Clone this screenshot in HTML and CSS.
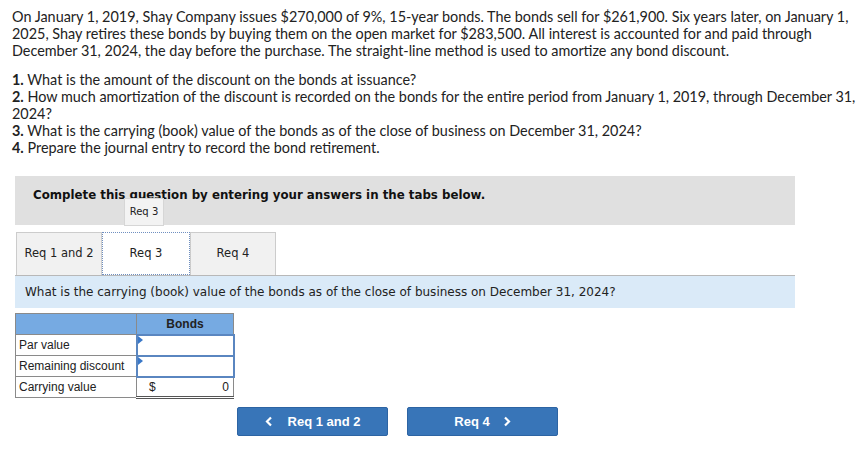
FILE: index.html
```html
<!DOCTYPE html>
<html lang="en">
<head>
  <meta charset="UTF-8" />
  <title>Bond retirement</title>
  <link rel="stylesheet" href="styles.css">
</head>
<body>
  <div class="question">
    <p class="intro">On January 1, 2019, Shay Company issues $270,000 of 9%, 15-year bonds. The bonds sell for $261,900. Six years later, on January 1, 2025, Shay retires these bonds by buying them on the open market for $283,500. All interest is accounted for and paid through December 31, 2024, the day before the purchase. The straight-line method is used to amortize any bond discount.</p>
    <ol class="reqs">
      <li><b>1.</b> What is the amount of the discount on the bonds at issuance?</li>
      <li><b>2.</b> How much amortization of the discount is recorded on the bonds for the entire period from January 1, 2019, through December 31, 2024?</li>
      <li><b>3.</b> What is the carrying (book) value of the bonds as of the close of business on December 31, 2024?</li>
      <li><b>4.</b> Prepare the journal entry to record the bond retirement.</li>
    </ol>
  </div>

  <div class="tabs-wrap">
    <div class="tabs-head">
      Complete this question by entering your answers in the tabs below.
      <span class="tooltip">Req 3</span>
    </div>

    <div class="tab-row">
      <div class="tab">Req 1 and 2</div>
      <div class="tab active">Req 3</div>
      <div class="tab">Req 4</div>
    </div>

    <div class="tab-prompt">What is the carrying (book) value of the bonds as of the close of business on December 31, 2024?</div>

    <table class="grid">
      <tr>
        <th class="blank"></th>
        <th>Bonds</th>
      </tr>
      <tr>
        <td class="label">Par value</td>
        <td class="input"><span class="mark"></span></td>
      </tr>
      <tr>
        <td class="label">Remaining discount</td>
        <td class="input"><span class="mark"></span></td>
      </tr>
      <tr>
        <td class="label">Carrying value</td>
        <td class="total"><span class="cur">$</span><span class="num">0</span></td>
      </tr>
    </table>

    <div class="nav">
      <button class="nav-btn">
        <svg class="chev prev" width="8" height="11" viewBox="0 0 8 11"><polyline points="6,1.5 2,5.5 6,9.5" /></svg>
        Req 1 and 2
      </button>
      <button class="nav-btn">
        Req 4
        <svg class="chev next" width="8" height="11" viewBox="0 0 8 11"><polyline points="2,1.5 6,5.5 2,9.5" /></svg>
      </button>
    </div>
  </div>
</body>
</html>
```

FILE: styles.css
```css
* {
  box-sizing: border-box;
}

body {
  margin: 0;
  background: #fff;
  color: #222;
}

.question {
  font-family: Lato, 'Liberation Sans', sans-serif;
  font-size: 14.4px;
  line-height: 17px;
  padding: 8px 0 0 12px;
  width: 864px;
}

.intro {
  margin: 0 0 12px;
}

.reqs {
  list-style: none;
  margin: 0;
  padding: 0;
}

.tabs-wrap {
  margin: 20px 0 0 15px;
  width: 780px;
  font-family: 'DejaVu Sans', Verdana, sans-serif;
}

.tabs-head {
  position: relative;
  background: #e0e0e0;
  height: 49px;
  padding: 12px 18px;
  font-size: 11.8px;
  font-weight: bold;
  color: #111;
}

.tooltip {
  position: absolute;
  left: 109px;
  top: 22px;
  width: 40px;
  height: 28px;
  background: #f3f3f3;
  border: 1px solid #d6d6d6;
  font-size: 10px;
  font-weight: normal;
  line-height: 26px;
  text-align: center;
  color: #222;
}

.tab-row {
  display: flex;
  margin-top: 7px;
  padding-left: 1px;
}

.tab {
  width: 86px;
  height: 43px;
  line-height: 41px;
  text-align: center;
  font-size: 11.5px;
  background: #f1f1f1;
  border: 1px solid #ccc;
  border-bottom: none;
  color: #222;
}

.tab.active {
  width: 88px;
  background: #fff;
  border: 1px dotted #6f8fc0;
}

.tab-prompt {
  background: #daeaf8;
  border-top: 1px solid #b8b8b8;
  height: 33px;
  line-height: 33px;
  padding-left: 10px;
  font-size: 12px;
  color: #222;
}

.grid {
  margin-top: 5px;
  border-collapse: collapse;
  font-family: 'Liberation Sans', Arial, sans-serif;
  font-size: 12px;
  color: #222;
}

.grid th {
  background: #76aae2;
  border: 1px solid #8a8a8a;
  height: 21px;
  width: 97px;
  font-weight: bold;
  color: #222;
}

.grid th.blank {
  width: 121px;
}

.grid td {
  height: 21px;
  padding: 0;
  border-bottom: 1px solid #8a8a8a;
  border-left: 1px solid #8a8a8a;
  border-right: 1px solid #8a8a8a;
}

.grid td.label {
  padding-left: 3px;
}

.grid td.input {
  position: relative;
  border: 2px solid #5a86c0;
  background: #fff;
}

.mark {
  position: absolute;
  left: 0;
  top: 0;
  border-top: 4px solid transparent;
  border-bottom: 4px solid transparent;
  border-left: 5px solid #3a78c8;
}

.grid td.total {
  border-bottom: 3px double #555;
  padding: 0 4px 0 12px;
}

.cur {
  float: left;
}

.num {
  float: right;
}

.nav {
  display: flex;
  gap: 19px;
  margin: 8px 0 0 222px;
}

.nav-btn {
  display: flex;
  align-items: center;
  justify-content: center;
  width: 151px;
  height: 29px;
  background: #3875b8;
  border: 1px solid #2d64a3;
  border-radius: 2px;
  color: #fff;
  font-family: 'Liberation Sans', Arial, sans-serif;
  font-size: 13px;
  font-weight: bold;
}

.chev polyline {
  fill: none;
  stroke: #fff;
  stroke-width: 2.2;
}

.chev.prev {
  margin-right: 15px;
}

.chev.next {
  margin-left: 13px;
}
```
